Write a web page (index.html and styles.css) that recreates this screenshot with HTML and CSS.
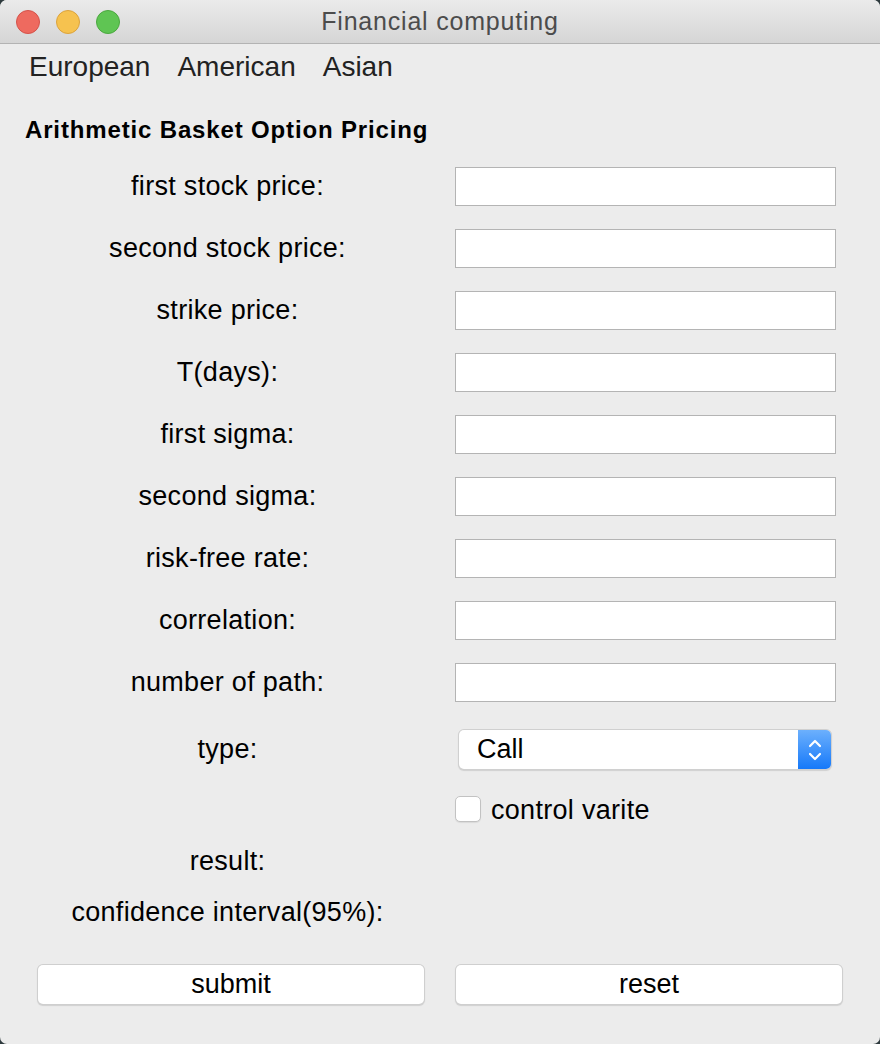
FILE: index.html
```html
<!DOCTYPE html>
<html>
<head>
<meta charset="utf-8">
<title>Financial computing</title>
<link rel="stylesheet" href="styles.css">
</head>
<body>
<div class="window">
  <div class="titlebar">
    <div class="lights">
      <span class="light red"></span>
      <span class="light yellow"></span>
      <span class="light green"></span>
    </div>
    <div class="title">Financial computing</div>
  </div>
  <div class="menubar">
    <span class="menu-item">European</span>
    <span class="menu-item">American</span>
    <span class="menu-item">Asian</span>
  </div>
  <div class="content">
    <h1 class="heading">Arithmetic Basket Option Pricing</h1>
    <div class="form">
      <div class="row"><div class="label">first stock price:</div><div class="input"></div></div>
      <div class="row"><div class="label">second stock price:</div><div class="input"></div></div>
      <div class="row"><div class="label">strike price:</div><div class="input"></div></div>
      <div class="row"><div class="label">T(days):</div><div class="input"></div></div>
      <div class="row"><div class="label">first sigma:</div><div class="input"></div></div>
      <div class="row"><div class="label">second sigma:</div><div class="input"></div></div>
      <div class="row"><div class="label">risk-free rate:</div><div class="input"></div></div>
      <div class="row"><div class="label">correlation:</div><div class="input"></div></div>
      <div class="row"><div class="label">number of path:</div><div class="input"></div></div>
      <div class="row row-type">
        <div class="label">type:</div>
        <div class="select">
          <span class="select-value">Call</span>
          <span class="select-arrows">
            <svg width="16" height="26" viewBox="0 0 16 26"><path d="M3 9 L8 4 L13 9" fill="none" stroke="#fff" stroke-width="2.2" stroke-linecap="round" stroke-linejoin="round"/><path d="M3 17 L8 22 L13 17" fill="none" stroke="#fff" stroke-width="2.2" stroke-linecap="round" stroke-linejoin="round"/></svg>
          </span>
        </div>
      </div>
      <div class="row row-check">
        <div class="label"></div>
        <div class="check"><span class="checkbox"></span><span class="check-label">control varite</span></div>
      </div>
      <div class="row row-text row-result"><div class="label">result:</div></div>
      <div class="row row-text row-conf"><div class="label">confidence interval(95%):</div></div>
    </div>
    <div class="buttons">
      <div class="button">submit</div>
      <div class="button">reset</div>
    </div>
  </div>
</div>
</body>
</html>
```

FILE: styles.css
```css
html, body {
  margin: 0;
  padding: 0;
  width: 880px;
  height: 1044px;
  background: #2f3b3e;
  overflow: hidden;
}

.window {
  width: 880px;
  height: 1044px;
  background: #ececec;
  border-radius: 7px;
  overflow: hidden;
  font-family: "Liberation Sans", Arial, sans-serif;
  color: #000;
}

.titlebar {
  position: relative;
  height: 43px;
  background: linear-gradient(#ebebeb, #d5d5d5);
  border-bottom: 1px solid #b3b3b3;
  display: flex;
  align-items: center;
  justify-content: center;
}

.lights {
  position: absolute;
  left: 16px;
  top: 10px;
  display: flex;
  gap: 16px;
}

.light {
  width: 24px;
  height: 24px;
  border-radius: 50%;
  box-sizing: border-box;
}
.red { background: #ee6a5f; border: 1px solid #d5524a; }
.yellow { background: #f6c24f; border: 1px solid #dca33c; }
.green { background: #5fc553; border: 1px solid #4ba83f; }

.title {
  font-size: 25px;
  color: #4c4c4c;
  letter-spacing: 0.8px;
}

.menubar {
  height: 46px;
  display: flex;
  align-items: center;
  padding-left: 29px;
  gap: 27px;
}

.menu-item {
  font-size: 28px;
  color: #222;
}

.content {
  padding: 0;
}

.heading {
  margin: 26px 0 0 25px;
  font-size: 24px;
  font-weight: bold;
  line-height: 28px;
  letter-spacing: 0.85px;
}

.form {
  margin-top: 23px;
}

.row {
  display: flex;
  align-items: center;
  height: 39px;
  margin-bottom: 23px;
}

.label {
  width: 455px;
  text-align: center;
  font-size: 27px;
  letter-spacing: 0.3px;
}

.input {
  width: 381px;
  height: 39px;
  box-sizing: border-box;
  background: #fff;
  border: 1px solid #b4b4b4;
}

.row-type {
  margin-top: 28px;
  margin-bottom: 20px;
}

.select {
  margin-left: 4px;
  width: 372px;
  height: 39px;
  box-sizing: border-box;
  background: #fff;
  border-radius: 5px;
  box-shadow: 0 0 0 1px #d0d0d0, 0 1px 1px 1px rgba(0,0,0,0.12);
  display: flex;
  align-items: center;
  overflow: hidden;
}

.select-value {
  flex: 1;
  padding-left: 18px;
  font-size: 27px;
}

.select-arrows {
  width: 33px;
  height: 39px;
  background: linear-gradient(#6cb0fd, #1679f9);
  display: flex;
  align-items: center;
  justify-content: center;
}

.row-check {
  margin-bottom: 16px;
}

.check {
  display: flex;
  align-items: center;
}

.checkbox {
  width: 26px;
  height: 26px;
  box-sizing: border-box;
  background: #fff;
  border: 1px solid #c2c2c2;
  border-radius: 5px;
  box-shadow: 0 1px 1px rgba(0,0,0,0.08);
}

.check-label {
  margin-left: 10px;
  margin-top: 3px;
  font-size: 27px;
  letter-spacing: 0.3px;
}

.row-text {
  height: 34px;
  margin-bottom: 17px;
}

.buttons {
  display: flex;
  gap: 32px;
  padding: 0 38px;
  margin-top: 36px;
}

.button {
  width: 386px;
  height: 39px;
  box-sizing: border-box;
  background: #fff;
  border-radius: 5px;
  box-shadow: 0 0 0 1px #cfcfcf, 0 1px 1px 1px rgba(0,0,0,0.12);
  display: flex;
  align-items: center;
  justify-content: center;
  font-size: 27px;
}
```
